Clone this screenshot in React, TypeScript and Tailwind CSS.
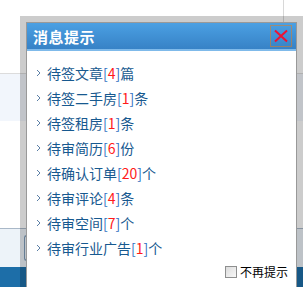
import React from "react"

const items: { pre: string; num: string; unit: string }[] = [
  { pre: "待签文章", num: "4", unit: "篇" },
  { pre: "待签二手房", num: "1", unit: "条" },
  { pre: "待签租房", num: "1", unit: "条" },
  { pre: "待审简历", num: "6", unit: "份" },
  { pre: "待确认订单", num: "20", unit: "个" },
  { pre: "待审评论", num: "4", unit: "条" },
  { pre: "待审空间", num: "7", unit: "个" },
  { pre: "待审行业广告", num: "1", unit: "个" },
]

function Chevron() {
  return (
    <svg width="5" height="8" viewBox="0 0 5 8" className="shrink-0">
      <path d="M1 1 L4 4 L1 7" fill="none" stroke="#5b7fa6" strokeWidth="1" />
    </svg>
  )
}

function CloseBox() {
  return (
    <svg width="22" height="22" viewBox="0 0 22 22">
      <rect x="0.5" y="0.5" width="21" height="21" fill="none" stroke="#f07a10" strokeWidth="1" strokeDasharray="1 1" />
      <path d="M5 5.5 L17 16.5 M17 5.5 L5 16.5" stroke="#ee1133" strokeWidth="2" />
    </svg>
  )
}

export default function App() {
  return (
    <div
      className="relative w-[303px] h-[287px] overflow-hidden bg-white"
      style={{ fontFamily: '"Noto Sans CJK SC", "Liberation Sans", sans-serif' }}
    >
      {/* page behind the popup */}
      <div className="flex flex-col h-full">
        <div className="h-[73px] flex justify-end">
          <div className="w-px h-[22px] bg-[#d8d8d8] mr-[19px]" />
        </div>
        <div className="h-px bg-[#dcdcdc]" />
        <div className="h-[47px] bg-[#f2f6fc]" />
        <div className="h-[107px] bg-white" />
        <div className="h-px bg-[#a9b8c8]" />
        <div className="h-[38px] bg-[#edf3f9] flex items-center pl-[24px]">
          <div className="w-[6px] h-[26px] rounded-l-[3px] border border-r-0 border-[#7f9db9]" />
        </div>
        <div className="flex-1 bg-[#1d6ea8]" />
      </div>

      {/* popup */}
      <div className="absolute left-[20px] top-[16px] w-[283px] bg-black/20 p-[6px]">
        <div className="border border-[#999] bg-white">
          <div className="h-[26px] bg-gradient-to-b from-[#4ba0e3] to-[#3782c6] flex items-center justify-between pl-[6px] pr-[4px]">
            <span className="text-white font-bold text-[15px] leading-none tracking-[0.5px]">消息提示</span>
            <CloseBox />
          </div>
          <div className="h-[2px] bg-[#7fbaea]" />
          <div className="pt-[9px] pl-[9px] flex flex-col">
            {items.map((it) => (
              <div key={it.pre} className="h-[25px] flex items-center gap-[6px]">
                <Chevron />
                <span className="text-[14px] leading-none text-[#17598f]">
                  {it.pre}
                  <span className="text-[#2f6fc0]">[</span>
                  <span className="text-[#ff1a1a]">{it.num}</span>
                  <span className="text-[#2f6fc0]">]</span>
                  {it.unit}
                </span>
              </div>
            ))}
          </div>
          <div className="flex justify-end items-center gap-[3px] pr-[8px] pt-[6px] pb-[10px]">
            <div className="w-[12px] h-[12px] border border-[#8e8f8f] bg-gradient-to-br from-[#dcdcdc] to-[#f8f8f8]" />
            <span className="text-[12px] leading-none text-black">不再提示</span>
          </div>
        </div>
      </div>
    </div>
  )
}
